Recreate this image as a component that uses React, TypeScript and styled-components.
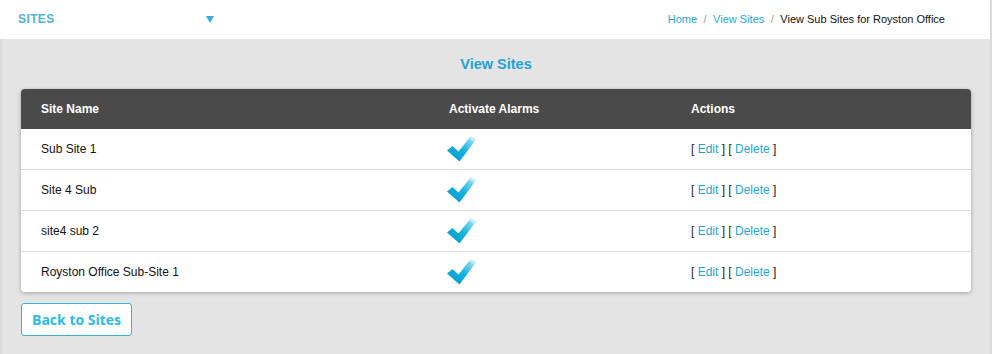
import { createGlobalStyle, styled } from 'styled-components'

const GlobalStyle = createGlobalStyle`
  html, body {
    margin: 0;
    padding: 0;
    background: #e4e4e4;
  }
  body {
    font-family: "Liberation Sans", Arial, sans-serif;
    font-size: 12px;
    color: #111;
  }
`

const Page = styled.div`
  width: 990px;
  min-height: 354px;
  border-right: 2px solid #d9d9d9;
  background: #e4e4e4;
`

const TopBar = styled.header`
  height: 39px;
  background: #ffffff;
  display: flex;
  align-items: center;
  justify-content: space-between;
  padding: 0 45px 0 18px;
`

const SectionPicker = styled.div`
  width: 196px;
  display: flex;
  align-items: center;
  justify-content: space-between;
  color: #4fb0da;
  font-weight: bold;
  font-size: 12px;
  letter-spacing: 0.4px;
  margin-top: -1px;
`

const Caret = styled.span`
  width: 0;
  height: 0;
  border-left: 4px solid transparent;
  border-right: 4px solid transparent;
  border-top: 7px solid #3fa8d6;
`

const Crumbs = styled.nav`
  display: flex;
  align-items: center;
  font-size: 11px;
  margin-top: -1px;
`

const Crumb = styled.a<{ $current?: boolean }>`
  color: ${({ $current }) => ($current ? '#111' : '#1ea5d9')};
  text-decoration: none;
`

const Sep = styled.span`
  color: #9a9a9a;
  padding: 0 6.5px;
`

const Content = styled.main`
  border-left: 2px solid #d9d9d9;
  padding: 0 19px 19px 19px;
`

const Title = styled.h2`
  margin: 0;
  height: 50px;
  line-height: 50px;
  text-align: center;
  font-size: 14.5px;
  font-weight: bold;
  color: #1ea2d6;
`

const Card = styled.div`
  background: #fff;
  border-radius: 4px;
  box-shadow: 0 1px 4px rgba(0, 0, 0, 0.28);
  overflow: hidden;
`

const HeadRow = styled.div`
  display: grid;
  grid-template-columns: 408px 242px 1fr;
  height: 40px;
  align-items: center;
  background: #4a4a4a;
  color: #fff;
  font-weight: bold;
`

const Row = styled.div`
  display: grid;
  grid-template-columns: 408px 242px 1fr;
  height: 40px;
  align-items: center;
  background: #fff;
  & + & {
    border-top: 1px solid #d9d9d9;
  }
`

const Cell = styled.div`
  padding-left: 20px;
`

const CheckCell = styled.div`
  padding-left: 18px;
  display: flex;
  align-items: center;
`

const Bracket = styled.span`
  color: #222;
`

const ActionLink = styled.a`
  color: #1ba6d9;
  text-decoration: none;
`

const BackButton = styled.button`
  margin-top: 11px;
  height: 33px;
  padding: 0 10px;
  background: #fff;
  border: 1px solid #33b3dd;
  border-radius: 3px;
  color: #29bce9;
  font-family: "Open Sans", sans-serif;
  font-weight: bold;
  font-size: 14px;
`

const Check = () => (
  <svg width="30" height="26" viewBox="0 0 30 26">
    <defs>
      <linearGradient id="chk" x1="0" y1="1" x2="1" y2="0">
        <stop offset="0" stopColor="#0094c6" />
        <stop offset="0.5" stopColor="#14b3df" />
        <stop offset="1" stopColor="#b4e8f7" />
      </linearGradient>
    </defs>
    <path d="M0 14.5 L5.5 10 L11.5 15.5 L23.5 0.5 L29 3.5 L12.5 25.5 Z" fill="url(#chk)" />
    <path d="M23.5 0.5 L29 3.5 L27 6 L22.5 3 Z" fill="#c9eff9" opacity="0.8" />
  </svg>
)

const sites = ['Sub Site 1', 'Site 4 Sub', 'site4 sub 2', 'Royston Office Sub-Site 1']

export default function App() {
  return (
    <Page>
      <GlobalStyle />
      <TopBar>
        <SectionPicker>
          SITES
          <Caret />
        </SectionPicker>
        <Crumbs>
          <Crumb href="#">Home</Crumb>
          <Sep>/</Sep>
          <Crumb href="#">View Sites</Crumb>
          <Sep>/</Sep>
          <Crumb $current>View Sub Sites for Royston Office</Crumb>
        </Crumbs>
      </TopBar>
      <Content>
        <Title>View Sites</Title>
        <Card>
          <HeadRow>
            <Cell>Site Name</Cell>
            <Cell>Activate Alarms</Cell>
            <Cell>Actions</Cell>
          </HeadRow>
          {sites.map((name) => (
            <Row key={name}>
              <Cell>{name}</Cell>
              <CheckCell>
                <Check />
              </CheckCell>
              <Cell>
                <Bracket>[ </Bracket>
                <ActionLink href="#">Edit</ActionLink>
                <Bracket> ] [ </Bracket>
                <ActionLink href="#">Delete</ActionLink>
                <Bracket> ]</Bracket>
              </Cell>
            </Row>
          ))}
        </Card>
        <BackButton>Back to Sites</BackButton>
      </Content>
    </Page>
  )
}
